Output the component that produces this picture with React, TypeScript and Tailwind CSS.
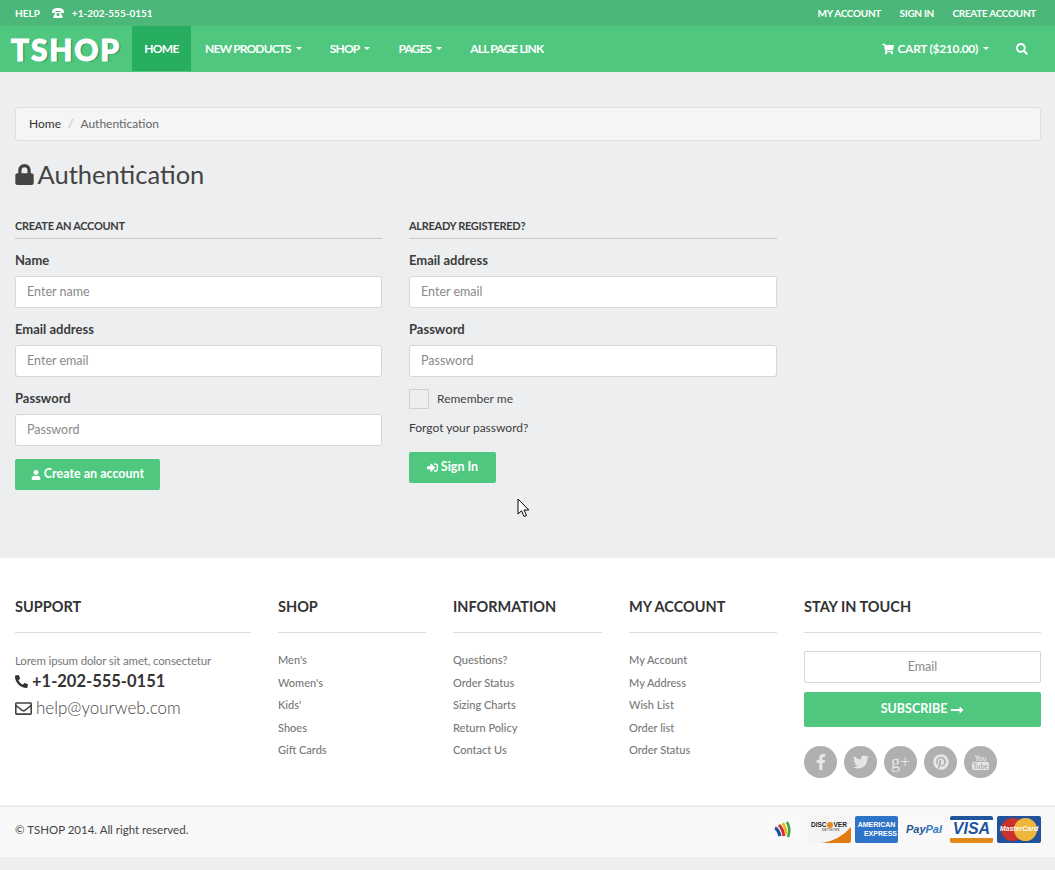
import React from 'react';
import {
    FaFacebookF,
    FaLock,
    FaLongArrowAltRight,
    FaPhoneAlt,
    FaPinterest,
    FaRegEnvelope,
    FaSearch,
    FaShoppingCart,
    FaSignInAlt,
    FaTwitter,
    FaUser,
} from 'react-icons/fa';

const navItems = [
    { label: 'NEW PRODUCTS', caret: true },
    { label: 'SHOP', caret: true },
    { label: 'PAGES', caret: true },
    { label: 'ALL PAGE LINK', caret: false },
];

const footerColumns = [
    { title: 'SHOP', links: ["Men's", "Women's", "Kids'", 'Shoes', 'Gift Cards'] },
    { title: 'INFORMATION', links: ['Questions?', 'Order Status', 'Sizing Charts', 'Return Policy', 'Contact Us'] },
    { title: 'MY ACCOUNT', links: ['My Account', 'My Address', 'Wish List', 'Order list', 'Order Status'] },
];

function Caret() {
    return <span className="ml-[5px] inline-block h-0 w-0 border-x-[3px] border-t-[3px] border-x-transparent border-t-white align-middle" />;
}

function Field({ label, placeholder }: { label: string; placeholder: string }) {
    return (
        <div className="mb-[11px]">
            <label className="mb-[6px] block h-[20px] text-[13px] font-bold leading-[20px] text-[#3c3c3c]">{label}</label>
            <input
                placeholder={placeholder}
                className="block h-[32px] w-full rounded-[3px] border border-[#d6d6d6] bg-white px-[11px] pb-[2px] text-[12.5px] text-[#555] placeholder:text-[#8a8a8a]"
            />
        </div>
    );
}

function SectionHeading({ children }: { children: React.ReactNode }) {
    return (
        <h3 className="mb-[11px] h-[21px] border-b border-[#c9c9cb] text-[11px] font-bold leading-[16px] tracking-[-0.3px] text-[#3c3c3c]">{children}</h3>
    );
}

function FooterHeading({ children }: { children: React.ReactNode }) {
    return (
        <h4 className="h-[35px] border-b border-[#dcdcdc] text-[14.5px] font-bold leading-[18px] text-[#333]">{children}</h4>
    );
}

function GoogleWallet() {
    return (
        <div className="flex h-[27px] w-[43px] items-center justify-center rounded-[2px] bg-[#f9f9f9]">
            <svg width="20" height="20" viewBox="0 0 20 20" fill="none">
                <path d="M2 8 Q5 9 7 16" stroke="#1c4fa8" strokeWidth="3.4" />
                <path d="M6 5 Q10 9 11 16" stroke="#d22f27" strokeWidth="3" />
                <path d="M10 3 Q13 8 13 14" stroke="#f1b31c" strokeWidth="2.6" />
                <path d="M14 2 Q18 9 15 17" stroke="#3aa745" strokeWidth="2.6" />
            </svg>
        </div>
    );
}

function Discover() {
    return (
        <div className="relative h-[27px] w-[43px] overflow-hidden rounded-[2px] bg-[#f4f4f4] [font-family:'Liberation_Sans',sans-serif]">
            <svg width="43" height="27" viewBox="0 0 43 27" className="absolute left-0 top-0">
                <path d="M14 27 Q32 24 43 11 V27 Z" fill="#e07c12" />
            </svg>
            <div className="absolute left-[3px] top-[5px] flex items-center text-[6.5px] font-bold leading-[8px] text-[#222]">
                DISC
                <span className="mx-[0.5px] inline-block h-[6px] w-[6px] rounded-full bg-[#e8861a]" />
                VER
            </div>
            <div className="absolute left-[14px] top-[12px] text-[3.5px] leading-[4px] text-[#444]">NETWORK</div>
        </div>
    );
}

function Amex() {
    return (
        <div className="flex h-[27px] w-[43px] flex-col items-center justify-center gap-[1px] rounded-[2px] bg-[#2d73c8] text-[7px] font-bold leading-[8px] text-white [font-family:'Liberation_Sans',sans-serif]">
            <span>AMERICAN</span>
            <span className="self-end pr-[1px]">EXPRESS</span>
        </div>
    );
}

function PayPal() {
    return (
        <div className="flex h-[27px] w-[44px] items-center justify-center rounded-[2px] bg-[#f9f9f9] text-[11px] font-bold italic text-[#23548f] [font-family:'Liberation_Sans',sans-serif]">
            Pay<span className="text-[#2f79c4]">Pal</span>
        </div>
    );
}

function Visa() {
    return (
        <div className="flex h-[27px] w-[43px] flex-col overflow-hidden rounded-[2px] bg-white [font-family:'Liberation_Sans',sans-serif]">
            <div className="h-[4px] bg-[#21569f]" />
            <div className="flex flex-1 items-center justify-center text-[16px] font-bold italic leading-none text-[#21569f]">VISA</div>
            <div className="h-[5px] bg-[#e08a1a]" />
        </div>
    );
}

function MasterCard() {
    return (
        <div className="relative flex h-[27px] w-[44px] items-center justify-center overflow-hidden rounded-[2px] bg-[#1f5298]">
            <div className="absolute left-[4px] top-[2px] h-[23px] w-[23px] rounded-full bg-[#c8312c]" />
            <div className="absolute right-[4px] top-[2px] h-[23px] w-[23px] rounded-full bg-[#eeb63b]" />
            <span className="relative text-[7px] font-bold italic text-white [font-family:'Liberation_Sans',sans-serif]">MasterCard</span>
        </div>
    );
}

function SocialIcons() {
    return (
        <div className="mt-[19px] flex gap-[7px] text-[16px] text-[#e6e6e6]">
            <span className="flex h-[32px] w-[33px] items-center justify-center rounded-full bg-[#b0b0b0]">
                <FaFacebookF />
            </span>
            <span className="flex h-[32px] w-[33px] items-center justify-center rounded-full bg-[#b0b0b0]">
                <FaTwitter />
            </span>
            <span className="flex h-[32px] w-[33px] items-center justify-center rounded-full bg-[#b0b0b0] text-[18px] leading-none [font-family:'Liberation_Serif',serif]">
                g+
            </span>
            <span className="flex h-[32px] w-[33px] items-center justify-center rounded-full bg-[#b0b0b0]">
                <FaPinterest />
            </span>
            <span className="flex h-[32px] w-[33px] flex-col items-center justify-center rounded-full bg-[#b0b0b0] text-[7px] font-bold leading-[8px]">
                <span>You</span>
                <span className="rounded-[2px] bg-[#e6e6e6] px-[1px] text-[#b0b0b0]">Tube</span>
            </span>
        </div>
    );
}

export default function App() {
    return (
        <div className="relative min-h-[870px] bg-[#edeef0] text-[13px] text-[#444] [font-family:'Lato',sans-serif]">
            {/* top bar */}
            <div className="flex h-[26px] items-center justify-between bg-[#4bb779] pl-[15px] pr-[19px] text-[10px] font-bold text-white">
                <div className="flex items-center">
                    <span>HELP</span>
                    <span className="ml-[12px] flex items-center">
                        <svg width="12" height="10" viewBox="0 0 12 10" fill="white" className="mr-[8px]">
                            <path d="M0 3.5C0 1 3 0 6 0s6 1 6 3.500V5H8.500V3h-5v2H0zM3 5.500 4 4h4l1 1.500 1.500 3V10h-9V8.500zM6 5a1.600 1.600 0 1 0 0 3.200A1.600 1.600 0 0 0 6 5z" />
                        </svg>
                        +1-202-555-0151
                    </span>
                </div>
                <div className="flex gap-[18.5px] tracking-[-0.3px]">
                    <span>MY ACCOUNT</span>
                    <span>SIGN IN</span>
                    <span>CREATE ACCOUNT</span>
                </div>
            </div>

            {/* main nav */}
            <div className="flex h-[46px] items-stretch bg-[#4fc77f] pb-[1px] text-[12px] font-bold text-white">
                <div className="flex w-[132px] items-center pl-[11px] text-[30px] font-black leading-none tracking-[1.8px] [-webkit-text-stroke:1px_white] [text-shadow:2px_1px_0_#3c9d63]">
                    TSHOP
                </div>
                <div className="flex w-[59px] items-center justify-center bg-[#27ae60] tracking-[-0.7px]">HOME</div>
                <div className="flex items-center pl-[14px] tracking-[-0.85px]">
                    {navItems.map((item) => (
                        <span key={item.label} className="mr-[28px] flex items-center">
                            {item.label}
                            {item.caret && <Caret />}
                        </span>
                    ))}
                </div>
                <div className="ml-auto flex items-center pr-[27px] tracking-[-0.3px]">
                    <FaShoppingCart className="mr-[3px] text-[12px]" />
                    <span>CART ($210.00)</span>
                    <Caret />
                    <FaSearch className="ml-[27px] text-[12px]" />
                </div>
            </div>

            {/* page content */}
            <div className="h-[485px] pl-[15px] pr-[14px] pt-[35px]">
                <div className="flex h-[34px] items-center rounded-[3px] border border-[#dedee0] bg-[#f5f5f6] pl-[13px] text-[12px]">
                    <span className="text-[#333]">Home</span>
                    <span className="px-[7px] text-[#bbb]">/</span>
                    <span className="text-[#666]">Authentication</span>
                </div>

                <h1 className="mt-[15px] flex h-[36px] items-center text-[25.5px] leading-[36px] text-[#444]">
                    <FaLock className="ml-[-1.5px] mr-[3px] text-[21px] text-[#444]" />
                    Authentication
                </h1>

                <div className="mt-[26px] grid w-[762px] grid-cols-[367px_368px] gap-x-[27px]">
                    <div>
                        <SectionHeading>CREATE AN ACCOUNT</SectionHeading>
                        <Field label="Name" placeholder="Enter name" />
                        <Field label="Email address" placeholder="Enter email" />
                        <Field label="Password" placeholder="Password" />
                        <button className="mt-[13px] flex h-[31px] w-[145px] items-center justify-center rounded-[2px] bg-[#4fc77f] text-[12.5px] font-bold text-white">
                            <FaUser className="mr-[3px] text-[10px]" />
                            Create an account
                        </button>
                    </div>
                    <div>
                        <SectionHeading>ALREADY REGISTERED?</SectionHeading>
                        <Field label="Email address" placeholder="Enter email" />
                        <Field label="Password" placeholder="Password" />
                        <div className="mt-[12px] flex h-[20px] items-center">
                            <span className="h-[20px] w-[20px] border border-[#d0d0d0] bg-[#edeef0]" />
                            <span className="ml-[8px] text-[12px] text-[#444]">Remember me</span>
                        </div>
                        <div className="mt-[9px] h-[20px] text-[12px] leading-[20px] text-[#3c3c3c]">Forgot your password?</div>
                        <button className="mt-[14px] flex h-[31px] w-[87px] items-center justify-center rounded-[2px] bg-[#4fc77f] text-[12.5px] font-bold text-white">
                            <FaSignInAlt className="mr-[3px] text-[11px]" />
                            Sign In
                        </button>
                    </div>
                </div>
            </div>

            {/* footer */}
            <div className="h-[248px] border-t border-[#f0f0f0] bg-white px-[15px] pt-[40px]">
                <div className="grid grid-cols-[236px_148px_149px_148px_237px] gap-x-[27px]">
                    <div>
                        <FooterHeading>SUPPORT</FooterHeading>
                        <p className="mt-[20px] text-[11.5px] leading-[15px] tracking-[-0.15px] text-[#777]">Lorem ipsum dolor sit amet, consectetur</p>
                        <p className="mt-[3px] flex items-center text-[16.5px] font-bold leading-[20px] text-[#333]">
                            <FaPhoneAlt className="mr-[4px] text-[13px]" />
                            +1-202-555-0151
                        </p>
                        <p className="mt-[6px] flex items-center text-[17px] font-light leading-[22px] text-[#444]">
                            <FaRegEnvelope className="mr-[4px] text-[17px]" />
                            help@yourweb.com
                        </p>
                    </div>
                    {footerColumns.map((col) => (
                        <div key={col.title}>
                            <FooterHeading>{col.title}</FooterHeading>
                            <ul className="mt-[16px] text-[11px] font-medium leading-[22.5px] text-[#777]">
                                {col.links.map((link) => (
                                    <li key={link}>{link}</li>
                                ))}
                            </ul>
                        </div>
                    ))}
                    <div>
                        <FooterHeading>STAY IN TOUCH</FooterHeading>
                        <input
                            placeholder="Email"
                            className="mt-[18px] block h-[32px] w-full rounded-[2px] border border-[#d6d6d6] bg-white pb-[2px] text-center text-[12.5px] placeholder:text-[#8a8a8a]"
                        />
                        <button className="mt-[9px] flex h-[35px] w-full items-center justify-center rounded-[2px] bg-[#4fc77f] text-[12.5px] font-bold text-white">
                            SUBSCRIBE
                            <FaLongArrowAltRight className="ml-[3px] text-[14px]" />
                        </button>
                        <SocialIcons />
                    </div>
                </div>
            </div>

            {/* bottom bar */}
            <div className="flex h-[52px] items-center justify-between border-t-2 border-[#eeeeee] bg-[#f8f8f8] pb-[5px] pl-[15px] pr-[14px]">
                <span className="text-[11.5px] text-[#444]">© TSHOP 2014. All right reserved.</span>
                <div className="flex items-center gap-[4px]">
                    <GoogleWallet />
                    <Discover />
                    <Amex />
                    <PayPal />
                    <Visa />
                    <MasterCard />
                </div>
            </div>

            {/* mouse pointer in the shot */}
            <svg width="14" height="20" viewBox="0 0 14 20" className="absolute left-[517px] top-[498px]">
                <path d="M1 1v15l3.500-3.200L7 18.500l2.500-1-2.500-5.500h4.800z" fill="white" stroke="black" strokeWidth="1" />
            </svg>
        </div>
    );
}
